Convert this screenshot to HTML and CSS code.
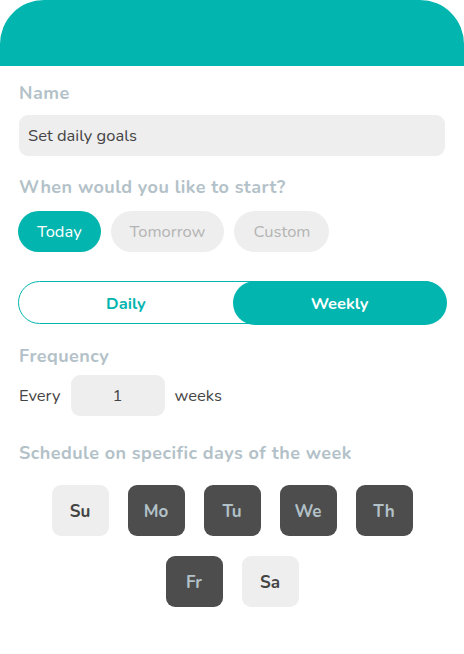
FILE: index.html
```html
<!DOCTYPE html>
<html>
<head>
<meta charset="utf-8">
<link rel="stylesheet" href="styles.css">
</head>
<body>
<div class="header"></div>
<div class="content">
  <div class="label label-name">Name</div>
  <div class="input">Set daily goals</div>

  <div class="label label-start">When would you like to start?</div>
  <div class="chips">
    <div class="chip chip-active">Today</div>
    <div class="chip">Tomorrow</div>
    <div class="chip">Custom</div>
  </div>

  <div class="toggle">
    <div class="toggle-opt">Daily</div>
    <div class="toggle-opt toggle-active">Weekly</div>
  </div>

  <div class="label label-freq">Frequency</div>
  <div class="freq-row">
    <span class="freq-text">Every</span>
    <div class="freq-box">1</div>
    <span class="freq-text">weeks</span>
  </div>

  <div class="label label-sched">Schedule on specific days of the week</div>
  <div class="days">
    <div class="day">Su</div>
    <div class="day day-on">Mo</div>
    <div class="day day-on">Tu</div>
    <div class="day day-on">We</div>
    <div class="day day-on">Th</div>
    <div class="day day-on">Fr</div>
    <div class="day">Sa</div>
  </div>
</div>
</body>
</html>
```
FILE: styles.css
```css
* { box-sizing: border-box; }
body {
  margin: 0;
  background: #ffffff;
  font-family: "Nunito", "Lato", "Noto Sans", sans-serif;
  color: #444444;
}
.header {
  height: 66px;
  background: #02b5ae;
  border-radius: 44px 44px 0 0;
}
.content {
  padding: 0 18px 0 18px;
}
.label {
  font-size: 18px;
  font-weight: 700;
  letter-spacing: 0.45px;
  line-height: 24px;
  color: #b3c1c8;
  padding-left: 1px;
}
.label-name { margin-top: 15px; margin-bottom: 10px; }
.label-start { margin-top: 19px; margin-bottom: 12px; }
.label-freq { margin-top: 20px; margin-bottom: 7px; }
.label-sched { margin-top: 25px; margin-bottom: 20px; }

.input {
  height: 41px;
  margin-left: 1px;
  width: 426px;
  background: #eeeeee;
  border-radius: 9px;
  padding-left: 9px;
  font-size: 16.5px;
  line-height: 41px;
  color: #444444;
}
.chips {
  display: flex;
  gap: 10px;
}
.chip {
  height: 41px;
  line-height: 41px;
  padding: 0 19px;
  border-radius: 21px;
  background: #eeeeee;
  color: #b4b4b4;
  font-size: 16.5px;
}
.chip-active {
  background: #02b5ae;
  color: #ffffff;
}
.toggle {
  margin-top: 29px;
  height: 43px;
  width: 428px;
  border: 1.5px solid #02b5ae;
  border-radius: 22px;
  display: flex;
}
.toggle-opt {
  flex: 1;
  text-align: center;
  font-size: 16.5px;
  font-weight: 700;
  color: #02b5ae;
  line-height: 40px;
  padding-top: 2px;
  border-radius: 22px;
}
.toggle-active {
  background: #02b5ae;
  color: #ffffff;
  margin: -1.5px -1.5px -1.5px 0;
  line-height: 41px;
}
.freq-row {
  display: flex;
  align-items: center;
  gap: 10px;
  padding-left: 1px;
}
.freq-text {
  font-size: 16.5px;
  color: #444444;
}
.freq-box {
  width: 94px;
  height: 41px;
  background: #eeeeee;
  border-radius: 9px;
  text-align: center;
  line-height: 41px;
  font-size: 16.5px;
}
.days {
  display: flex;
  flex-wrap: wrap;
  justify-content: center;
  column-gap: 19px;
  row-gap: 20px;
  padding: 0 33px;
}
.day {
  width: 57px;
  height: 51px;
  border-radius: 9px;
  background: #eeeeee;
  color: #444444;
  font-size: 17px;
  font-weight: 700;
  display: flex;
  align-items: center;
  justify-content: center;
  padding-top: 1px;
}
.day-on {
  background: #4d4d4d;
  color: #b3c1c8;
}
```
